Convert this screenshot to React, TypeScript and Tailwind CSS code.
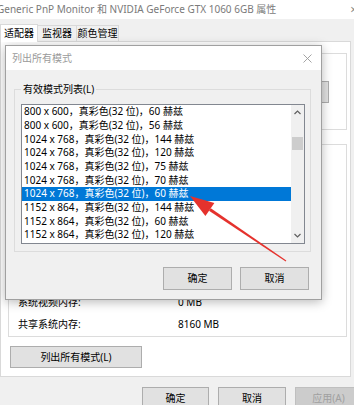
const modes = [
  "800 x 600，真彩色(32 位)，60 赫兹",
  "800 x 600，真彩色(32 位)，56 赫兹",
  "1024 x 768，真彩色(32 位)，144 赫兹",
  "1024 x 768，真彩色(32 位)，120 赫兹",
  "1024 x 768，真彩色(32 位)，75 赫兹",
  "1024 x 768，真彩色(32 位)，70 赫兹",
  "1024 x 768，真彩色(32 位)，60 赫兹",
  "1152 x 864，真彩色(32 位)，144 赫兹",
  "1152 x 864，真彩色(32 位)，60 赫兹",
  "1152 x 864，真彩色(32 位)，120 赫兹",
];

const selected = 6;

function Chevron({ up }: { up?: boolean }) {
  return (
    <svg width="7" height="5" viewBox="0 0 7 5">
      <path
        d={up ? "M0.5 4 L3.5 1 L6.5 4" : "M0.5 1 L3.5 4 L6.5 1"}
        fill="none"
        stroke="#606060"
        strokeWidth="1.2"
      />
    </svg>
  );
}

export default function App() {
  return (
    <div className="relative w-[354px] h-[405px] overflow-hidden bg-[#f0f0f0] text-[10px] text-black font-['Noto_Sans','Noto_Sans_CJK_SC',sans-serif]">
      {/* property sheet title */}
      <div className="h-[19px] bg-white flex items-center justify-between">
        <span className="-ml-[3px] text-[10px] text-[#7a7a7a] whitespace-nowrap">
          Generic PnP Monitor 和 NVIDIA GeForce GTX 1060 6GB 属性
        </span>
        <span className="-mr-[3px] text-[12px] text-[#888]">×</span>
      </div>

      {/* tabs */}
      <div className="h-[22px] flex items-end">
        <div className="relative z-10 -mb-px h-[18px] w-[38px] bg-white border border-b-0 border-[#d9d9d9] flex items-center justify-center">
          适配器
        </div>
        <div className="h-[16px] w-[39px] border border-l-0 border-b-0 border-[#d9d9d9] flex items-center justify-center">
          监视器
        </div>
        <div className="h-[16px] w-[42px] border border-l-0 border-b-0 border-[#d9d9d9] flex items-center justify-center">
          颜色管理
        </div>
      </div>

      {/* tab page */}
      <div className="mr-[3px] h-[336px] bg-white border border-[#d9d9d9] flex flex-col">
        <div className="mt-[11px] ml-[7px] mr-[3px] h-[77px] border border-[#dcdcdc] flex items-center justify-end pr-[17px]">
          <div className="w-[60px] h-[22px] bg-[#e1e1e1] border border-[#adadad]" />
        </div>
        <div className="mt-[14px] ml-[7px] mr-[3px] h-[193px] border border-[#dcdcdc] flex flex-col justify-end gap-[4px] pb-[3px] pl-[9px]">
          <div className="h-[18px] flex items-center">
            <span className="w-[160px]">系统视频内存:</span>
            <span>0 MB</span>
          </div>
          <div className="h-[18px] flex items-center">
            <span className="w-[160px]">共享系统内存:</span>
            <span>8160 MB</span>
          </div>
        </div>
        <button className="mt-[9px] ml-[9px] w-[132px] h-[22px] bg-[#e1e1e1] border border-[#adadad]">
          列出所有模式(L)
        </button>
      </div>

      {/* bottom buttons */}
      <div className="pt-[10px] pl-[142px] flex gap-[9px]">
        <button className="shrink-0 w-[67px] h-[23px] bg-[#e1e1e1] border border-[#adadad]">确定</button>
        <button className="shrink-0 w-[68px] h-[23px] bg-[#e1e1e1] border border-[#adadad]">取消</button>
        <button className="shrink-0 w-[67px] h-[23px] bg-[#cccccc] border border-[#bfbfbf] text-[#a0a0a0]">
          应用(A)
        </button>
      </div>

      {/* list all modes dialog */}
      <div className="absolute left-[5px] top-[45px] w-[317px] h-[255px] border border-[#a0a0a0] bg-[#f0f0f0] shadow-[0_2px_10px_rgba(0,0,0,0.28)] flex flex-col">
        <div className="h-[24px] bg-white flex items-center justify-between pl-[6px] pr-[9px] text-[#9a9a9a]">
          <span>列出所有模式</span>
          <svg width="9" height="9" viewBox="0 0 9 9">
            <path d="M0.5 0.5 L8.5 8.5 M8.5 0.5 L0.5 8.5" stroke="#9a9a9a" strokeWidth="0.9" />
          </svg>
        </div>
        <fieldset className="mt-[12px] ml-[8px] mr-[10px] border border-[#dcdcdc] pb-[7px]">
          <legend className="ml-[6px] px-[2px] leading-[14px]">有效模式列表(L)</legend>
          <div className="mt-[8px] ml-[6px] mr-[5px] h-[140px] bg-white border border-[#828790] flex overflow-hidden">
            <div className="flex-1 flex flex-col">
              {modes.map((m, i) => (
                <div
                  key={i}
                  className={`h-[13.67px] shrink-0 flex items-center pl-[2px] whitespace-nowrap ${
                    i === selected ? "bg-[#0078d7] text-white" : ""
                  }`}
                >
                  {m}
                </div>
              ))}
            </div>
            <div className="w-[13px] bg-[#f0f0f0] flex flex-col items-center">
              <div className="h-[15px] flex items-center">
                <Chevron up />
              </div>
              <div className="mt-[17px] w-[11px] h-[13px] bg-[#cdcdcd]" />
              <div className="flex-1" />
              <div className="h-[15px] flex items-center">
                <Chevron />
              </div>
            </div>
          </div>
        </fieldset>
        <div className="mt-[15px] mr-[12px] flex justify-end gap-[8px]">
          <button className="w-[69px] h-[23px] bg-[#e1e1e1] border border-[#adadad]">确定</button>
          <button className="w-[69px] h-[23px] bg-[#e1e1e1] border border-[#adadad]">取消</button>
        </div>
      </div>

      {/* red annotation arrow */}
      <svg className="absolute left-0 top-0 pointer-events-none" width="354" height="405">
        <polygon
          points="209.0,210.8 210.8,208.2 286.3,260.5 285.7,261.5"
          fill="#e5322d"
        />
        <polygon points="190,196 214.4,202.9 205.4,216.1" fill="#e5322d" />
      </svg>
    </div>
  );
}
